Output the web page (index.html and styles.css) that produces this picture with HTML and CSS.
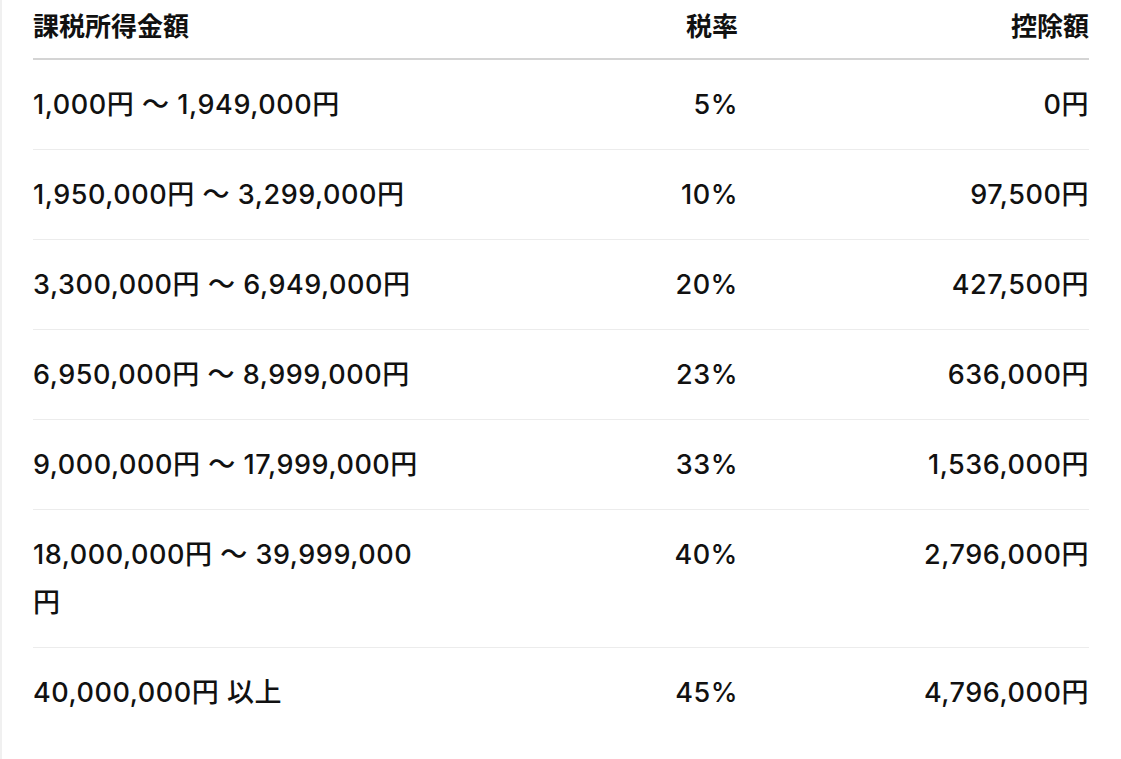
FILE: index.html
```html
<!DOCTYPE html>
<html lang="ja">
<head>
<meta charset="utf-8">
<link rel="stylesheet" href="styles.css">
</head>
<body>
<div class="page">
  <table class="tax">
    <thead>
      <tr>
        <th class="c1">課税所得金額</th>
        <th class="c2">税率</th>
        <th class="c3">控除額</th>
      </tr>
    </thead>
    <tbody>
      <tr><td class="c1">1,000円 〜 1,949,000円</td><td class="c2">5%</td><td class="c3">0円</td></tr>
      <tr><td class="c1">1,950,000円 〜 3,299,000円</td><td class="c2">10%</td><td class="c3">97,500円</td></tr>
      <tr><td class="c1">3,300,000円 〜 6,949,000円</td><td class="c2">20%</td><td class="c3">427,500円</td></tr>
      <tr><td class="c1">6,950,000円 〜 8,999,000円</td><td class="c2">23%</td><td class="c3">636,000円</td></tr>
      <tr><td class="c1">9,000,000円 〜 17,999,000円</td><td class="c2">33%</td><td class="c3">1,536,000円</td></tr>
      <tr><td class="c1">18,000,000円 〜 39,999,000円</td><td class="c2">40%</td><td class="c3">2,796,000円</td></tr>
      <tr><td class="c1">40,000,000円 以上</td><td class="c2">45%</td><td class="c3">4,796,000円</td></tr>
    </tbody>
  </table>
</div>
</body>
</html>
```

FILE: styles.css
```css
html, body {
  margin: 0;
  padding: 0;
  background: #ffffff;
}
body {
  font-family: Inter, "Noto Sans CJK JP", sans-serif;
  color: #111111;
}
.page {
  border-left: 2px solid #f0f0f0;
  min-height: 759px;
  box-sizing: border-box;
  padding: 0 32px 0 31px;
}
.tax {
  width: 1056px;
  border-collapse: collapse;
  table-layout: fixed;
}
.tax th {
  font-weight: 700;
  font-size: 26px;
  line-height: 48px;
  padding: 3px 0 7px;
  border-bottom: 2px solid #d4d4d4;
}
.tax td {
  font-weight: 500;
  font-size: 27px;
  letter-spacing: 0.55px;
  line-height: 48px;
  padding: 21px 0 20px;
  vertical-align: top;
  border-bottom: 1px solid #ececec;
}
.tax tbody tr:last-child td {
  border-bottom: none;
}
.c1 { width: 398px; text-align: left; }
.c2 { width: 307px; text-align: right; }
.c3 { text-align: right; }
```
